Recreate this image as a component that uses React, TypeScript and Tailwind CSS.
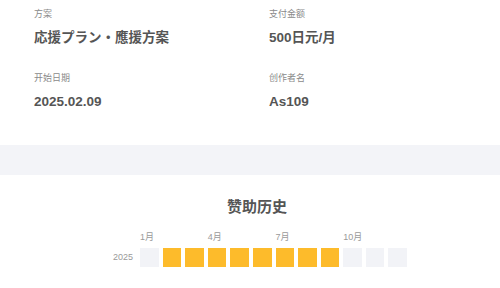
import React from "react";

const font = { fontFamily: '"Liberation Sans", "Noto Sans CJK SC", sans-serif' };

function Field({ label, value }: { label: string; value: string }) {
  return (
    <div className="flex flex-col">
      <div className="text-[9px] leading-[12px] text-[#8a8a8a]">{label}</div>
      <div className="mt-[8px] text-[13.5px] leading-[20px] font-bold text-[#555555]">{value}</div>
    </div>
  );
}

export default function App() {
  const filled = [false, true, true, true, true, true, true, true, true, false, false, false];
  const months = ["1月", "", "", "4月", "", "", "7月", "", "", "10月", "", ""];
  return (
    <div className="w-[500px] h-[288px] overflow-hidden bg-white" style={font}>
      <div className="grid grid-cols-[235px_1fr] gap-y-[24px] pl-[34px] pt-[8px]">
        <Field label="方案" value="応援プラン・應援方案" />
        <Field label="支付金额" value="500日元/月" />
        <Field label="开始日期" value="2025.02.09" />
        <Field label="创作者名" value="As109" />
      </div>
      <div className="mt-[33px] h-[30px] bg-[#f3f4f8]" />
      <div className="mt-[21px] pl-[14px] text-center text-[15px] leading-[22px] font-bold text-[#555555]">
        赞助历史
      </div>
      <div className="mt-[13px] pl-[113px] flex flex-col gap-[5px]">
        <div className="flex gap-[7px]">
          <div className="w-[20px]" />
          <div className="grid w-[267px] grid-cols-12 gap-1">
            {months.map((m, i) => (
              <div key={i} className="text-[9px] leading-[12px] whitespace-nowrap text-[#9a9a9a]">
                {m}
              </div>
            ))}
          </div>
        </div>
        <div className="flex items-center gap-[7px]">
          <div className="w-[20px] text-[9px] leading-[12px] text-[#9a9a9a]">2025</div>
          <div className="grid w-[267px] grid-cols-12 gap-1">
            {filled.map((f, i) => (
              <div
                key={i}
                className={f ? "aspect-square bg-[#fdbb2b]" : "aspect-square bg-[#f2f3f7]"}
              />
            ))}
          </div>
        </div>
      </div>
    </div>
  );
}
